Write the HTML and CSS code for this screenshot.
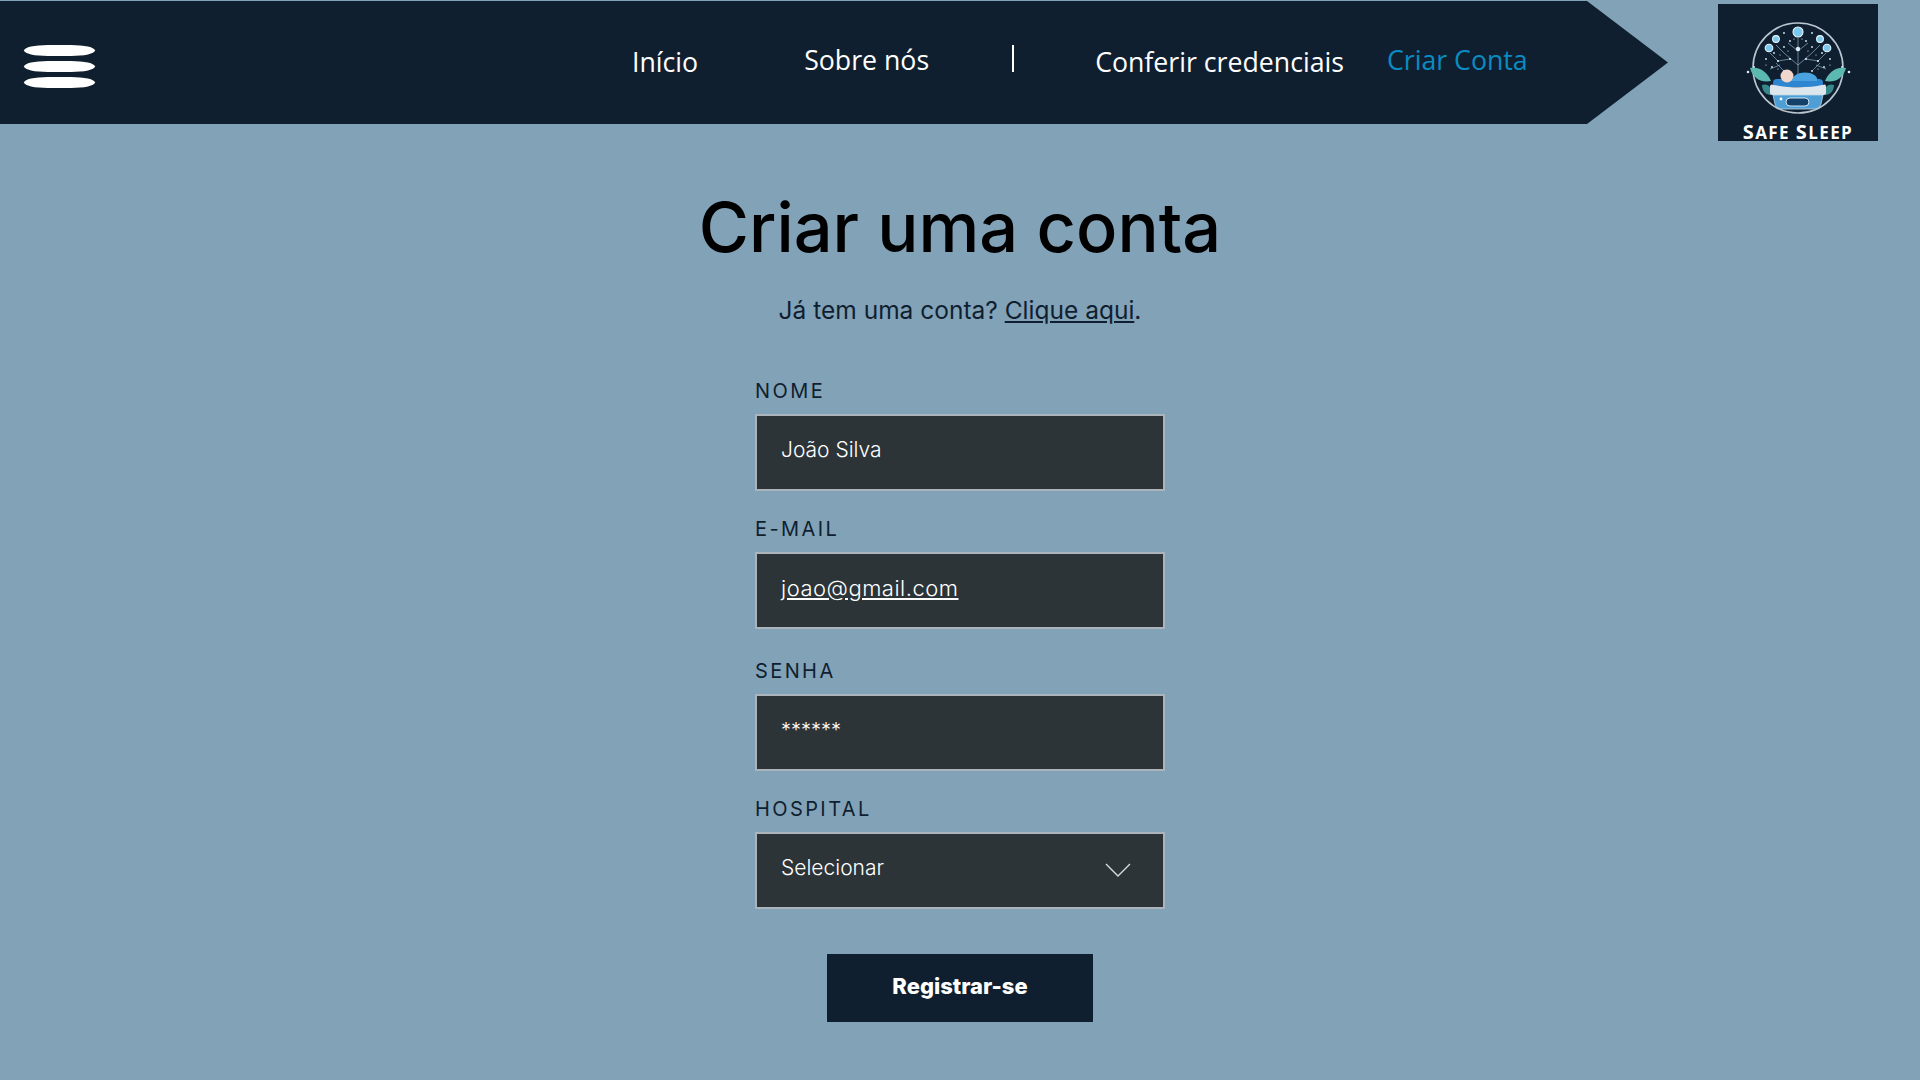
FILE: index.html
```html
<!DOCTYPE html>
<html lang="pt-BR">
<head>
<meta charset="utf-8">
<title>Criar uma conta</title>
<link rel="stylesheet" href="styles.css">
</head>
<body>
<header class="top">
  <div class="bar">
    <button class="burger" aria-label="Menu"><span></span><span></span><span></span></button>
    <nav class="nav">
      <a class="link inicio">Início</a>
      <a class="link sobre">Sobre nós</a>
      <span class="divider"></span>
      <a class="link conferir">Conferir credenciais</a>
      <a class="link active">Criar Conta</a>
    </nav>
  </div>
  <div class="logo">
    <svg viewBox="0 0 160 138" width="160" height="138" aria-label="Safe Sleep">
      <circle cx="80" cy="65" r="45" class="ring"/>
      <g class="wires">
        <path d="M80 35V76M80 62L66 50L58 42M80 62L94 50L102 42M72 56L60 58L52 50M88 56L100 58L108 50M80 48L70 40M80 48L90 40M62 62L52 66M98 62L108 66M66 68L58 60M94 68L102 60"/>
      </g>
      <g class="dots">
        <circle cx="66" cy="30" r=".9"/><circle cx="94" cy="30" r=".9"/><circle cx="72" cy="38" r=".9"/><circle cx="88" cy="38" r=".9"/>
        <circle cx="66" cy="44" r=".9"/><circle cx="94" cy="44" r=".9"/><circle cx="56" cy="50" r=".9"/><circle cx="104" cy="50" r=".9"/>
        <circle cx="48" cy="56" r=".9"/><circle cx="112" cy="56" r=".9"/><circle cx="60" cy="58" r="1.1"/><circle cx="100" cy="58" r="1.1"/>
        <circle cx="80" cy="46" r="2.2"/><circle cx="72" cy="56" r="1.1"/><circle cx="88" cy="56" r="1.1"/><circle cx="54" cy="64" r=".9"/>
        <circle cx="106" cy="64" r=".9"/><circle cx="66" cy="68" r=".9"/><circle cx="94" cy="68" r=".9"/><circle cx="30" cy="69" r="1.3"/><circle cx="131" cy="69" r="1.3"/>
        <circle cx="76" cy="36" r=".6"/><circle cx="84" cy="36" r=".6"/><circle cx="62" cy="52" r=".6"/><circle cx="98" cy="52" r=".6"/>
        <circle cx="70" cy="48" r=".6"/><circle cx="90" cy="48" r=".6"/><circle cx="48" cy="62" r=".6"/><circle cx="112" cy="62" r=".6"/>
        <circle cx="36" cy="64" r="1"/><circle cx="124" cy="64" r="1"/><circle cx="60" cy="66" r=".6"/><circle cx="100" cy="66" r=".6"/>
      </g>
      <g class="node">
        <circle cx="80" cy="29" r="5"/><circle cx="58" cy="36" r="3.4"/><circle cx="102" cy="36" r="3.4"/><circle cx="51" cy="45" r="3.8"/><circle cx="109" cy="45" r="3.8"/>
      </g>
      <path class="leaf" d="M32 65C42 63 50 70 53 78C44 80 35 76 32 65Z"/>
      <path class="leaf" d="M128 65C118 63 110 70 107 78C116 80 125 76 128 65Z"/>
      <path class="leaf dark" d="M44 82C50 80 54 84 53 92C48 92 44 88 44 82Z"/>
      <path class="leaf dark" d="M116 82C110 80 106 84 107 92C112 92 116 88 116 82Z"/>
      <rect x="55" y="76" width="50" height="8" rx="4" class="mattress"/>
      <path class="body" d="M74 78C74 71 84 68 92 70C98 72 100 75 99 78Z"/>
      <circle cx="69" cy="73" r="6.5" class="head"/>
      <path class="rim" d="M52 84C52 81 54 81 56 82C70 85 92 85 104 82C107 81 108 81 108 84V90C108 92 106 92 104 92H56C54 92 52 92 52 90Z"/>
      <path class="device" d="M55 92H105L103 101C102 105 98 106 94 106H66C62 106 58 105 57 101Z"/>
      <rect x="68" y="95" width="23" height="8" rx="4" class="screen"/>
      <circle cx="63" cy="96" r="1.4" class="white"/>
      <text x="80" y="136" text-anchor="middle" class="brand"><tspan class="cap">S</tspan>AFE <tspan class="cap">S</tspan>LEEP</text>
    </svg>
  </div>
</header>
<main class="page">
  <h1 class="title">Criar uma conta</h1>
  <p class="lead">Já tem uma conta? <a class="lead-link">Clique aqui</a>.</p>
  <form class="form">
    <div class="field first">
      <label class="label">NOME</label>
      <div class="control"><span class="value">João Silva</span></div>
    </div>
    <div class="field">
      <label class="label">E-MAIL</label>
      <div class="control"><span class="value email">joao@gmail.com</span></div>
    </div>
    <div class="field wide">
      <label class="label">SENHA</label>
      <div class="control"><span class="value stars">******</span></div>
    </div>
    <div class="field">
      <label class="label">HOSPITAL</label>
      <div class="control select">
        <span class="value">Selecionar</span>
        <svg class="chev" viewBox="0 0 26 16" width="26" height="16"><path d="M1 2L13 14L25 2"/></svg>
      </div>
    </div>
    <button class="submit" type="button">Registrar-se</button>
  </form>
</main>
</body>
</html>
```
FILE: styles.css
```css
* { box-sizing: border-box; }
html, body { margin: 0; height: 100%; }
body {
  background: #82a2b8;
  font-family: "Inter", "Liberation Sans", sans-serif;
  overflow: hidden;
}
.top {
  display: flex;
  align-items: flex-start;
  height: 124px;
}
.bar {
  display: flex;
  align-items: center;
  width: 1668px;
  height: 123px;
  margin-top: 1px;
  background: #0f1f30;
  clip-path: polygon(0 0, 1587px 0, 100% 50%, 1587px 100%, 0 100%);
}
.burger {
  display: flex;
  flex-direction: column;
  gap: 5px;
  width: 71px;
  margin: 8px 0 0 24px;
  padding: 0;
  border: 0;
  background: none;
}
.burger span {
  display: block;
  height: 11px;
  background: #fff;
  border-radius: 24px / 50%;
}
.nav {
  display: flex;
  align-items: center;
  margin-left: 537px;
  margin-top: -5px;
  font-family: "Open Sans", sans-serif;
  font-size: 26.7px;
  color: #fff;
}
.link { white-space: nowrap; line-height: 38px; }
.inicio { margin-top: 3px; }
.sobre { margin-left: 106px; }
.divider {
  width: 2px;
  height: 27px;
  margin-left: 83px;
  margin-top: -3px;
  background: #fff;
}
.conferir { margin-left: 81px; margin-top: 3px; }
.active { margin-left: 43px; color: #0a8cc2; }
.logo {
  width: 160px;
  height: 137px;
  margin: 4px 0 0 50px;
  background: #0f1f30;
  flex: none;
}
.logo svg { display: block; margin-top: -1px; overflow: visible; }
.ring { fill: none; stroke: #b9c5cf; stroke-width: 1.6; }
.wires path { fill: none; stroke: #9fc6dc; stroke-width: .6; }
.dots circle { fill: #dbeef8; }
.node circle { fill: #7cc8ee; stroke: #eaf6fc; stroke-width: 1.1; }
.leaf { fill: #5cb9b1; }
.leaf.dark { fill: #37888a; }
.mattress { fill: #2f86d0; }
.body { fill: #4aa3e0; }
.head { fill: #f0d6cc; }
.rim { fill: #dce6ec; }
.device { fill: #4e9fd6; stroke: #bcd4e4; stroke-width: .8; }
.screen { fill: #14406a; stroke: #cfe6f5; stroke-width: 1; }
.white { fill: #fff; }
.brand {
  font-family: "Open Sans", sans-serif;
  font-weight: 700;
  font-size: 17px;
  letter-spacing: 1.4px;
  fill: #fff;
}
.cap { font-size: 20px; }
.page {
  display: flex;
  flex-direction: column;
  align-items: center;
}
.title {
  margin: 62px 0 0;
  font-weight: 500;
  font-size: 68.5px;
  line-height: 84px;
  color: #000;
  white-space: nowrap;
}
.lead {
  margin: 24px 0 0;
  font-size: 24.5px;
  line-height: 32px;
  color: #0f1f30;
}
.lead-link { text-decoration: underline; }
.form {
  display: flex;
  flex-direction: column;
  align-items: center;
  width: 410px;
}
.field { width: 100%; margin-top: 28px; }
.field.first { margin-top: 55px; }
.field.wide { margin-top: 32px; }
.label {
  display: block;
  height: 20px;
  margin-bottom: 13px;
  font-size: 20px;
  line-height: 20px;
  letter-spacing: 2.4px;
  color: #0f1f30;
}
.control {
  display: flex;
  align-items: flex-start;
  justify-content: space-between;
  height: 77px;
  padding: 19px 32px 0 24px;
  background: #2d3438;
  border: 2px solid #aab4ba;
  color: #fff;
}
.value { font-size: 21px; line-height: 30px; font-weight: 300; }
.email { font-size: 22px; letter-spacing: .5px; text-decoration: underline; }
.stars { font-size: 20px; }
.chev { margin-top: 9px; }
.chev path { fill: none; stroke: #d8dcde; stroke-width: 1.4; }
.submit {
  width: 266px;
  height: 68px;
  margin-top: 45px;
  padding-bottom: 6px;
  border: 0;
  background: #0f1f30;
  color: #fff;
  font-family: "Inter", sans-serif;
  font-weight: 800;
  font-size: 22px;
}
```
